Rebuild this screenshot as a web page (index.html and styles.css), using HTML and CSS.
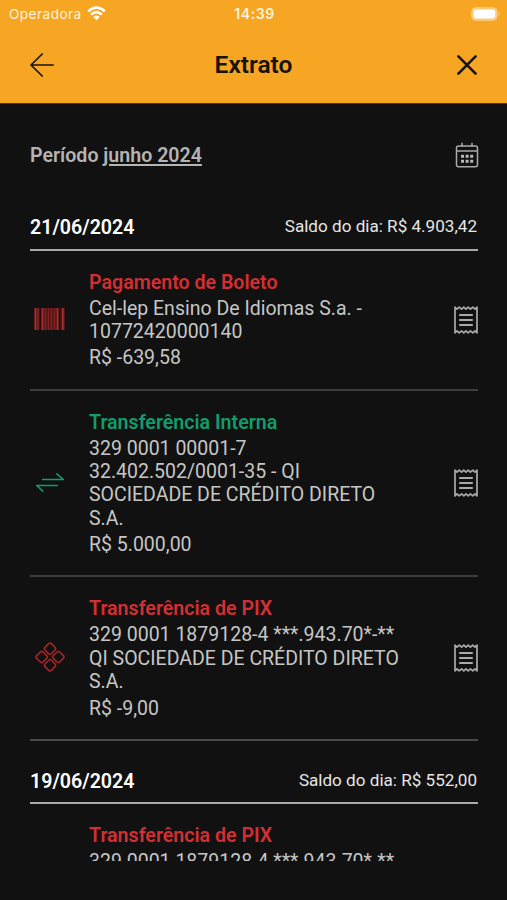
FILE: index.html
```
<!DOCTYPE html>
<html lang="pt-BR">
<head>
<meta charset="utf-8">
<meta name="viewport" content="width=device-width, initial-scale=1">
<title>Extrato</title>
<link rel="stylesheet" href="styles.css">
</head>
<body>
<svg class="sprite" aria-hidden="true">
  <symbol id="receipt" viewBox="0 0 24 28">
    <path d="M1 1.2L3 3.2L5.2 1.2L7.6 3.2L9.8 1.2L12 3.2L14.2 1.2L16.4 3.2L18.8 1.2L21 3.2L23 1.2V26.8L21 24.8L18.8 26.8L16.4 24.8L14.2 26.8L12 24.8L9.8 26.8L7.6 24.8L5.2 26.8L3 24.8L1 26.8Z" fill="none" stroke="currentColor" stroke-width="1.7" stroke-linejoin="round"/>
    <path d="M5.2 9H18.8M5.2 14H18.8M5.2 19H18.8" stroke="currentColor" stroke-width="2"/>
  </symbol>
</svg>
<div class="app">
  <header class="top">
    <div class="status">
      <div class="carrier">
        <span>Operadora</span>
        <svg width="19" height="15" viewBox="0 0 19 15"><g fill="none" stroke="#fff" stroke-width="2.6"><path d="M1.2 5.4Q9.5 -2 17.8 5.4"/><path d="M4.1 8.6Q9.5 3.8 14.9 8.6"/></g><path d="M6.3 11Q9.5 8.2 12.7 11L9.5 14.2Z" fill="#fff"/></svg>
      </div>
      <time>14:39</time>
      <svg class="battery" width="30" height="14" viewBox="0 0 30 14"><rect x=".7" y=".7" width="25.4" height="12.6" rx="4" fill="#fbc878" stroke="#fbd08a"/><rect x="2.5" y="2.5" width="21.8" height="9" rx="2.3" fill="#fff"/><path d="M27.6 4.8Q29.6 7 27.6 9.2Z" fill="#fbd08a"/></svg>
    </div>
    <div class="nav">
      <svg width="24" height="24" viewBox="0 0 24 24"><path d="M12.2 1L1 12L12.2 23M1 12H23.2" fill="none" stroke="#16130a" stroke-width="1.7" stroke-linecap="round" stroke-linejoin="round"/></svg>
      <h1>Extrato</h1>
      <svg width="20" height="20" viewBox="0 0 20 20"><path d="M1.4 1.4L18.6 18.6M18.6 1.4L1.4 18.6" stroke="#16130a" stroke-width="2.6" stroke-linecap="round"/></svg>
    </div>
  </header>
  <main class="list">
    <div class="period">
      <p>Período <u>junho 2024</u></p>
      <svg width="24" height="26" viewBox="0 0 24 26"><g fill="none" stroke="#aaa" stroke-width="1.5"><rect x="1.5" y="4" width="21" height="20.8" rx="2"/><path d="M1.5 9H22.5M7 .7V4.5M17 .7V4.5"/></g><path d="M6 12.8h3v3h-3zM10.6 12.8h3v3h-3zM15.2 12.8h3v3h-3zM6 17.8h3v3h-3zM10.6 17.8h3v3h-3zM15.2 17.8h3v3h-3z" fill="#b8b8b8"/></svg>
    </div>
    <section>
      <div class="day"><h2>21/06/2024</h2><span>Saldo do dia: R$ 4.903,42</span></div>
      <article class="entry debit">
        <div class="kind"><svg width="31" height="22" viewBox="0 0 31 22"><path d="M0 0H31V22H0Z" fill="#471819"/><path d="M1.5 0V22M8.5 0V22M23.5 0V22M28.8 0V22" stroke="#b12b2d" stroke-width="1.7"/><path d="M4 0V22M11.5 0V22M14.5 0V22M17.5 0V22M20.5 0V22" stroke="#85201f" stroke-width="1.6"/><path d="M6.3 0V22M25.9 0V22" stroke="#181111" stroke-width="1.2"/></svg></div>
        <div class="info"><h3>Pagamento de Boleto</h3><p>Cel-lep Ensino De Idiomas S.a. -<br>10772420000140</p><p>R$ -639,58</p></div>
        <svg class="receipt" width="26" height="28"><use href="#receipt"/></svg>
      </article>
      <article class="entry credit">
        <div class="kind"><svg width="30" height="20" viewBox="0 0 30 20"><path d="M7 6.5H28.3L21.3 0.4M23 12.5H1.7L8.3 18.6" fill="none" stroke="currentColor" stroke-width="1.6" stroke-linejoin="round"/></svg></div>
        <div class="info"><h3>Transferência Interna</h3><p>329 0001 00001-7<br>32.402.502/0001-35 - QI<br>SOCIEDADE DE CRÉDITO DIRETO<br>S.A.</p><p>R$ 5.000,00</p></div>
        <svg class="receipt" width="26" height="28"><use href="#receipt"/></svg>
      </article>
      <article class="entry debit">
        <div class="kind"><svg width="32" height="34" viewBox="0 1 32 34"><g fill="none" stroke="#a32527" stroke-width="1.6"><rect x="-4.5" y="-4.5" width="9" height="9" rx="1.9" transform="translate(16 8.7) rotate(45)"/><rect x="-4.5" y="-4.5" width="9" height="9" rx="1.9" transform="translate(7.7 17) rotate(45)"/><rect x="-4.5" y="-4.5" width="9" height="9" rx="1.9" transform="translate(24.3 17) rotate(45)"/><rect x="-4.5" y="-4.5" width="9" height="9" rx="1.9" transform="translate(16 25.3) rotate(45)"/></g></svg></div>
        <div class="info"><h3>Transferência de PIX</h3><p>329 0001 1879128-4 ***.943.70*-**<br>QI SOCIEDADE DE CRÉDITO DIRETO<br>S.A.</p><p>R$ -9,00</p></div>
        <svg class="receipt" width="26" height="28"><use href="#receipt"/></svg>
      </article>
    </section>
    <section>
      <div class="day"><h2>19/06/2024</h2><span>Saldo do dia: R$ 552,00</span></div>
      <article class="entry debit">
        <div class="kind"></div>
        <div class="info"><h3>Transferência de PIX</h3><p>329 0001 1879128-4 ***.943.70*-**</p></div>
      </article>
    </section>
  </main>
</div>
</body>
</html>
```
FILE: styles.css
```
* { box-sizing: border-box; }
body, h1, h2, h3, p { margin: 0; }
body { background: #111; font-family: Roboto, "Liberation Sans", sans-serif; }
svg { display: block; flex: none; }
.sprite { position: absolute; width: 0; height: 0; }
.app { height: 900px; display: flex; flex-direction: column; overflow: hidden; }
.top { height: 103px; flex: none; background: #f6a623; box-shadow: 0 1px 0 #553b10; }
.status {
  height: 28px;
  padding: 0 7px 0 9px;
  display: grid;
  grid-template-columns: 1fr auto 1fr;
  align-items: center;
  font: 13.6px/28px Inter, sans-serif;
  color: #fff3dc;
}
.carrier { display: flex; align-items: center; gap: 5px; letter-spacing: .45px; }
.carrier svg { margin-top: -2px; }
.status time { font-weight: 600; font-size: 14px; letter-spacing: .6px; }
.battery { justify-self: end; margin: -1px -1px 0 0; }
.nav { height: 73px; padding: 0 30px; display: flex; align-items: center; justify-content: space-between; }
.nav h1 { font-size: 24.5px; font-weight: 600; line-height: 28px; margin: 0 4px 0 0; color: #16130a; }
.list { height: 758px; flex: none; padding: 0 29px 0 30px; overflow: hidden; }
.period {
  height: 84px;
  padding-top: 22px;
  display: flex;
  align-items: center;
  justify-content: space-between;
  color: #b4b4b4;
}
.period p { font-size: 19.6px; font-weight: 600; line-height: 24px; }
.period u { text-decoration-thickness: 1.5px; text-underline-offset: 2px; }
.period svg { margin: -2px -1px 0 0; }
.day {
  height: 63.6px;
  padding-top: 21px;
  border-bottom: 2px solid #aaa;
  display: flex;
  align-items: center;
  justify-content: space-between;
  color: #e6e6e6;
}
.day h2 { font-size: 19.6px; font-weight: 600; line-height: 24px; color: #fff; }
.day span { font-size: 17.1px; line-height: 22px; margin: -5px 1px 0 0; }
.entry {
  padding: 20px 0 18.8px;
  border-bottom: 2px solid #3d3d3d;
  display: flex;
  align-items: center;
}
.entry:last-child { border-bottom-color: #4a4a4a; }
.kind { width: 39px; margin: -2px 20px 0 0; display: flex; justify-content: center; }
.info { flex: 1; font-size: 19.5px; line-height: 23.4px; color: #c6c6c6; white-space: nowrap; }
.info h3 { font-size: 19.6px; font-weight: 600; line-height: 23.4px; }
.info p { margin-top: 2.6px; }
.info p + p { margin-top: 3px; }
.debit h3 { color: #d32f33; }
.credit { color: #139c6b; }
.credit h3 { color: #139c6b; }
.receipt { color: #aaa; margin: -1px -1px 0 0; }
```
